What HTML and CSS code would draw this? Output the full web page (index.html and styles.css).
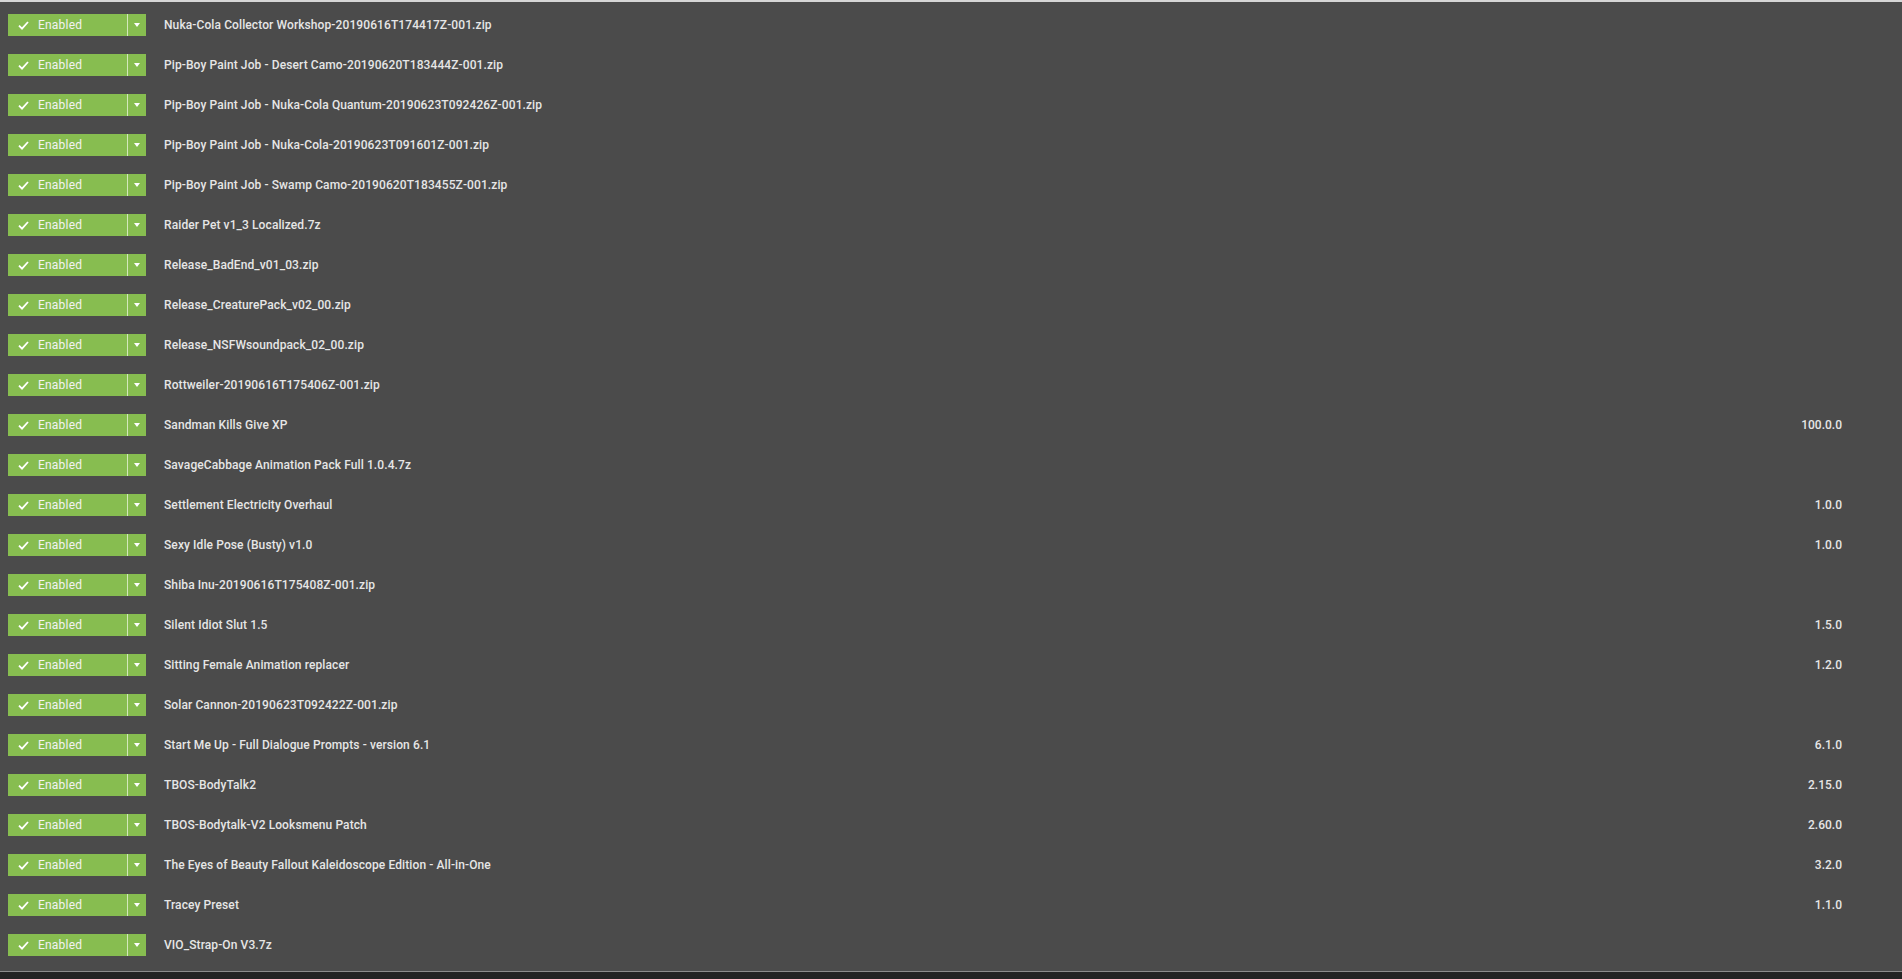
FILE: index.html
```html
<!DOCTYPE html>
<html lang="en">
<head>
  <meta charset="UTF-8"/>
  <title>Mods</title>
  <link rel="stylesheet" href="styles.css">
</head>
<body>

  <div class="mod-list" id="modList"></div>
  <div class="bottom-bar"></div>

  <script>
    const mods = [
      ["Nuka-Cola Collector Workshop-20190616T174417Z-001.zip", ""],
      ["Pip-Boy Paint Job - Desert Camo-20190620T183444Z-001.zip", ""],
      ["Pip-Boy Paint Job - Nuka-Cola Quantum-20190623T092426Z-001.zip", ""],
      ["Pip-Boy Paint Job - Nuka-Cola-20190623T091601Z-001.zip", ""],
      ["Pip-Boy Paint Job - Swamp Camo-20190620T183455Z-001.zip", ""],
      ["Raider Pet v1_3 Localized.7z", ""],
      ["Release_BadEnd_v01_03.zip", ""],
      ["Release_CreaturePack_v02_00.zip", ""],
      ["Release_NSFWsoundpack_02_00.zip", ""],
      ["Rottweiler-20190616T175406Z-001.zip", ""],
      ["Sandman Kills Give XP", "100.0.0"],
      ["SavageCabbage Animation Pack Full 1.0.4.7z", ""],
      ["Settlement Electricity Overhaul", "1.0.0"],
      ["Sexy Idle Pose (Busty) v1.0", "1.0.0"],
      ["Shiba Inu-20190616T175408Z-001.zip", ""],
      ["Silent Idiot Slut 1.5", "1.5.0"],
      ["Sitting Female Animation replacer", "1.2.0"],
      ["Solar Cannon-20190623T092422Z-001.zip", ""],
      ["Start Me Up - Full Dialogue Prompts - version 6.1", "6.1.0"],
      ["TBOS-BodyTalk2", "2.15.0"],
      ["TBOS-Bodytalk-V2 Looksmenu Patch", "2.60.0"],
      ["The Eyes of Beauty Fallout Kaleidoscope Edition - All-in-One", "3.2.0"],
      ["Tracey Preset", "1.1.0"],
      ["VIO_Strap-On V3.7z", ""]
    ];

    const list = document.getElementById("modList");
    mods.forEach(([name, version]) => {
      const row = document.createElement("div");
      row.className = "mod-row";
      row.innerHTML = `
        <div class="status-btn">
          <span class="status-main">
            <svg class="check" width="11" height="9" viewBox="0 0 11 9">
              <path d="M1 4.6 L4 7.6 L10 1" fill="none" stroke="#fff" stroke-width="1.8"/>
            </svg>
            Enabled
          </span>
          <span class="status-drop"><span class="caret"></span></span>
        </div>
        <div class="mod-name">${name}</div>
        <div class="mod-version">${version}</div>`;
      list.appendChild(row);
    });
  </script>

</body>
</html>
```

FILE: styles.css
```css
html, body {
  margin: 0;
  height: 100%;
}

body {
  font-family: Roboto, 'Noto Sans', sans-serif;
  background-color: #222;
  color: #e6e6e6;
  display: flex;
  flex-direction: column;
  overflow: hidden;
}

.mod-list {
  flex: 1;
  background-color: #4b4b4b;
  border-top: 2px solid #d6d6d6;
  border-bottom: 1px solid #8c8c8c;
  padding: 3px 60px 0 8px;
}

.mod-row {
  height: 40px;
  display: flex;
  align-items: center;
}

.status-btn {
  width: 138px;
  height: 22px;
  display: flex;
  background-color: #87bd50;
  color: #f2f2f2;
  font-size: 12px;
  letter-spacing: 0.2px;
}

.status-main {
  width: 120px;
  display: flex;
  align-items: center;
  gap: 9px;
  padding-left: 10px;
  box-sizing: border-box;
  border-right: 1px solid #d3e8bc;
}

.check {
  flex: none;
}

.status-drop {
  flex: 1;
  display: flex;
  align-items: center;
  justify-content: center;
}

.caret {
  width: 0;
  height: 0;
  border-left: 3px solid transparent;
  border-right: 3px solid transparent;
  border-top: 4px solid #fff;
}

.mod-name {
  flex: 1;
  margin-left: 18px;
  font-size: 12px;
  font-weight: 500;
  letter-spacing: 0.1px;
}

.mod-version {
  font-size: 12px;
  font-weight: 500;
  text-align: right;
}

.bottom-bar {
  height: 7px;
  background-color: #232323;
}
```
